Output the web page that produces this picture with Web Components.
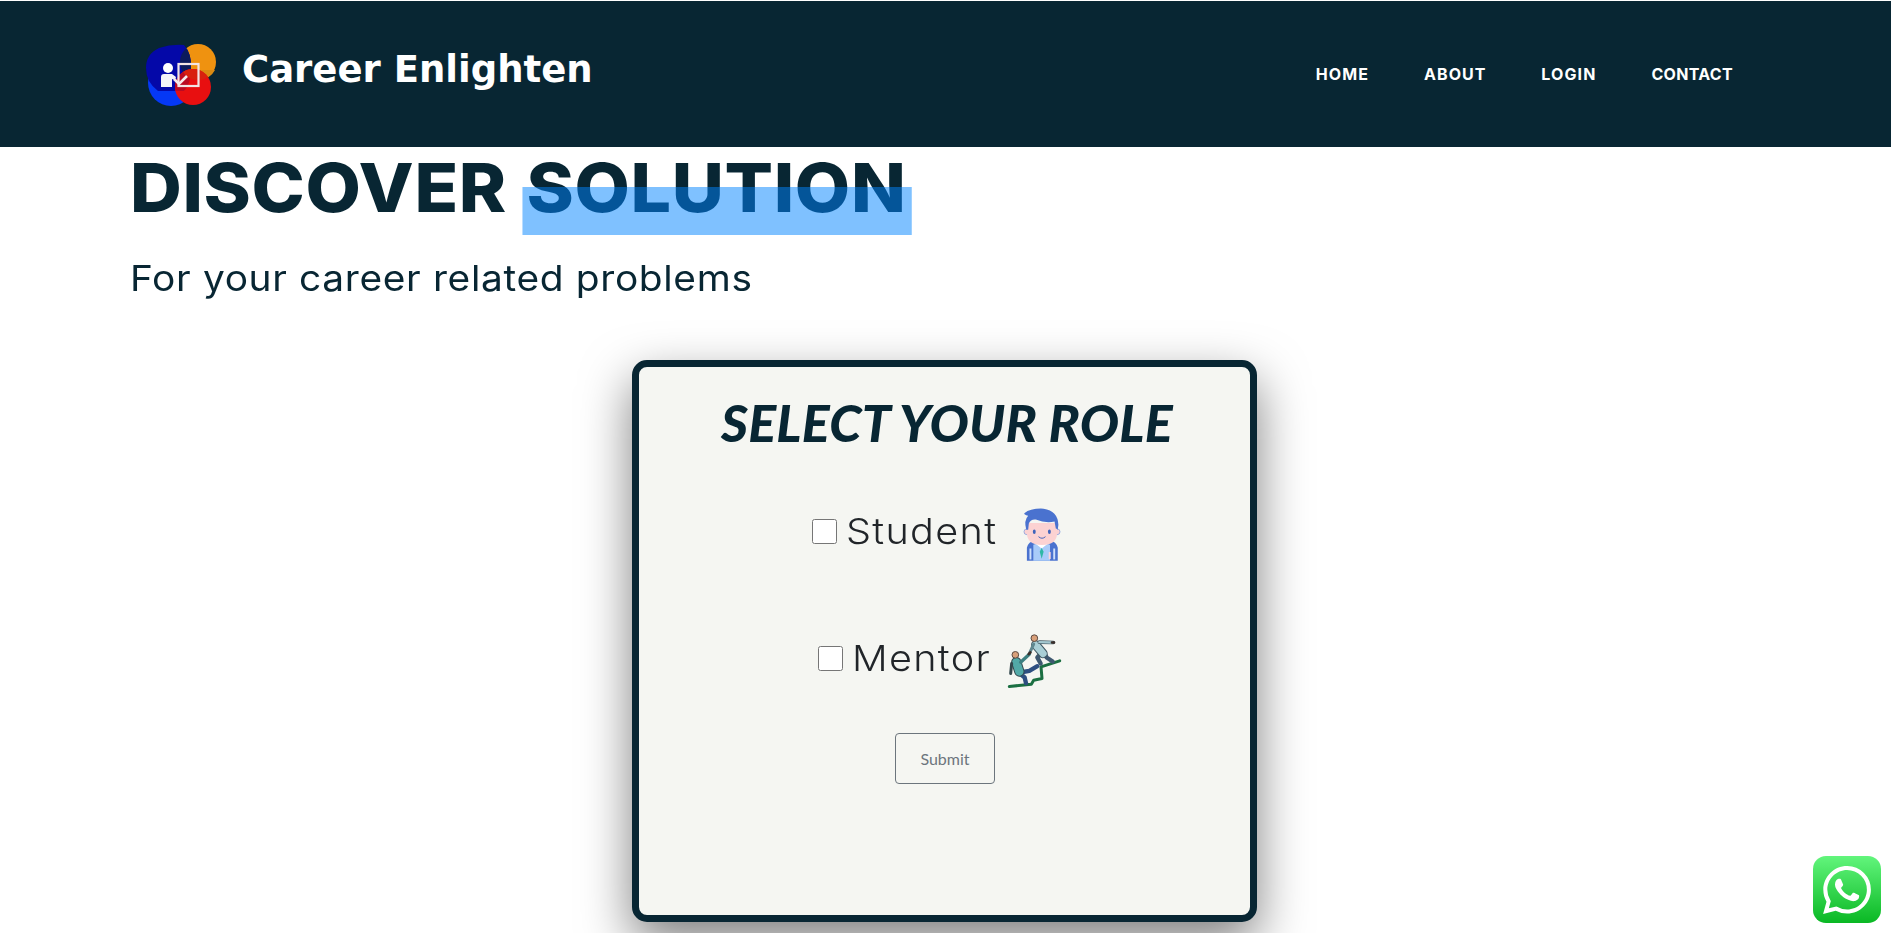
<!DOCTYPE html>
<html lang="en"><head><meta charset="utf-8"><title>Career Enlighten</title>
<style>
html,body{margin:0;padding:0;background:#fff;overflow:hidden;height:933px;}
body{font-family:"Inter","Liberation Sans",sans-serif;color:#212529;}
</style></head><body>
<career-header>
  <nav-link style="--ls:1.1px">HOME</nav-link><nav-link style="--ls:1px">ABOUT</nav-link><nav-link style="--ls:1.1px">LOGIN</nav-link><nav-link style="--ls:.3px">CONTACT</nav-link>
</career-header>
<hero-banner highlight="SOLUTION" lead="DISCOVER">For your career related problems</hero-banner>
<role-card heading="SELECT YOUR ROLE">
  <role-option label="Student" offset="173" icon="student"></role-option>
  <role-option label="Mentor" offset="179" icon="mentor"></role-option>
</role-card>
<whatsapp-button></whatsapp-button>
<script>
const DARK='#082633';
class CareerHeader extends HTMLElement{constructor(){super();this.attachShadow({mode:'open'}).innerHTML=`
<style>
:host{display:flex;box-sizing:border-box;height:146px;margin-top:1px;background:${DARK};align-items:flex-start;padding-left:146px;padding-right:158px;}
.logo{width:70px;height:62px;margin-top:43px;flex:none;display:block}
.brand{font:700 37px/1 "DejaVu Sans",sans-serif;color:#fff;margin:0 0 0 26px;padding-top:50px;white-space:nowrap}
nav{margin-left:auto;display:flex;gap:55px;padding-top:64px}
</style>
<svg class="logo" viewBox="0 0 70 62">
<defs><clipPath id="lens"><path d="M13 4Q25 0 38 1 46 10 45 24 45 40 38 47L12 47Q0 38 0 24 0 10 13 4Z"/></clipPath>
<clipPath id="lens2"><circle cx="47" cy="43" r="18"/></clipPath></defs>
<circle cx="52" cy="18" r="18" fill="#ef9210"/>
<path d="M52 36a18 18 0 0 0 17-10l-20 0z" fill="#d98a12"/>
<circle cx="25" cy="39" r="23" fill="#0538f5"/>
<path d="M13 4Q25 0 38 1 46 10 45 24 45 40 38 47L12 47Q0 38 0 24 0 10 13 4Z" fill="#0408a8"/>
<circle cx="52" cy="18" r="18" fill="#0b1a5c" clip-path="url(#lens)"/>
<circle cx="47" cy="43" r="18" fill="#e80f10"/>
<g clip-path="url(#lens2)"><path d="M13 4Q25 0 38 1 46 10 45 24 45 40 38 47L12 47Q0 38 0 24 0 10 13 4Z" fill="#bb0a22"/><circle cx="52" cy="18" r="18" fill="#d8200e"/></g>
<rect x="32.500" y="20" width="20" height="22" fill="none" stroke="#f2e4e4" stroke-width="2.200"/>
<circle cx="22" cy="24" r="5" fill="#fff"/>
<path d="M15 43V33q0-3 3-3h8l4 3-1 3-3-1v8z" fill="#f4f4f8"/>
<path d="M28 35l5 5 8-8" fill="none" stroke="#f6eaea" stroke-width="2.600"/>
</svg>
<h1 class="brand">Career Enlighten</h1>
<nav><slot></slot></nav>`}}
customElements.define('career-header',CareerHeader);

class NavLink extends HTMLElement{constructor(){super();this.attachShadow({mode:'open'}).innerHTML=`
<style>:host{display:block;font:700 16px/20px "Inter",sans-serif;color:#fff;letter-spacing:var(--ls,.2px);white-space:nowrap;margin-top:-1px}</style><slot></slot>`}}
customElements.define('nav-link',NavLink);

class HeroBanner extends HTMLElement{constructor(){super();const l=this.getAttribute('lead'),h=this.getAttribute('highlight');this.attachShadow({mode:'open'}).innerHTML=`
<style>
:host{display:block;padding-left:130px;color:${DARK}}
h2{margin:0;width:fit-content;font:800 68px/80px "Inter",sans-serif;letter-spacing:.6px;word-spacing:3px;white-space:nowrap;height:82px;transform:scaleX(1.055);transform-origin:left center}
.mark{position:relative;display:inline-block}
.mark::after{content:"";position:absolute;left:-4px;right:-4.500px;top:40px;height:48px;background:rgba(0,131,255,.5)}
p{margin:0;width:fit-content;font:400 36px/46px "Inter",sans-serif;letter-spacing:.6px;padding-top:26px;transform:scaleX(1.08);transform-origin:left center}
</style>
<h2>${l} <span class="mark">${h}</span></h2>
<p><slot></slot></p>`}}
customElements.define('hero-banner',HeroBanner);

class RoleCard extends HTMLElement{constructor(){super();this.attachShadow({mode:'open'}).innerHTML=`
<style>
:host{display:block;box-sizing:border-box;width:625px;height:562px;margin:59px 0 0 632px;border:7px solid ${DARK};border-radius:15px;background:#f5f6f2;box-shadow:0 20px 50px rgba(0,0,0,.5)}
h3{margin:0;padding:25px 0 0 5px;text-align:center;font:italic 900 52px/60px "Lato",sans-serif;color:${DARK};letter-spacing:.25px;height:67px}
.list{display:flex;flex-direction:column;gap:71px;padding-top:44px}
button{display:block;box-sizing:border-box;width:100px;height:51px;margin:47px 0 0 256px;border:1px solid #6c757d;border-radius:4px;background:transparent;color:#6c757d;font:400 16px/1.5 "Lato",sans-serif;padding:0}
</style>
<h3>${this.getAttribute('heading')}</h3>
<div class="list"><slot></slot></div>
<button type="button">Submit</button>`}}
customElements.define('role-card',RoleCard);

const ICONS={student:`<svg style="width:38px;height:54px;margin:7px 0 0 39px" viewBox="700 48 118 168">
<path d="M712 212v-40q2-18 30-26h36q28 8 30 26v40z" fill="#4a72cf"/>
<path d="M732 212v-50l26-8 26 8v50z" fill="#a9cbf9"/>
<path d="M740 160l18 14 18-14-6-10h-24z" fill="#fff"/>
<path d="M758 172l6 12-6 22-6-22z" fill="#2fb8a6"/>
<rect x="780" y="185" width="6" height="22" fill="#fbd5dc"/>
<rect x="720" y="174" width="6" height="34" fill="#cfe0fb"/><rect x="794" y="174" width="6" height="34" fill="#cfe0fb"/>
<circle cx="712" cy="122" r="9" fill="#fcd2d2" stroke="#6d8fdc" stroke-width="2"/><circle cx="806" cy="122" r="9" fill="#fcd2d2" stroke="#6d8fdc" stroke-width="2"/>
<path d="M712 95h94v30q0 38-47 38t-47-38z" fill="#fcd2d2"/>
<path d="M710 116q-8-30 6-44-14-4-12-8 20-16 60-14 44 6 46 50l-2 16q-4-4-6-4l-4-22q-28 6-58-6-16-2-22 12l-2 20z" fill="#4a72cf"/>
<ellipse cx="735" cy="122" rx="4.500" ry="7" fill="#3f63bb"/><ellipse cx="782" cy="122" rx="4.500" ry="7" fill="#3f63bb"/>
<path d="M749 138q10 9 20 0" fill="none" stroke="#3f63bb" stroke-width="3" stroke-linecap="round"/>
</svg>`,
mentor:`<svg style="width:55px;height:57px;margin:6px 0 0 29px" viewBox="655 425 165 170">
<g fill="none" stroke-linecap="round" stroke-linejoin="round">
<path d="M662 585L728 578 735 566 760 561 757 526 813 508" stroke="#1b6f42" stroke-width="9"/>
<path d="M758 484L746 498 756 516M768 486L774 498 792 510" stroke="#3e5870" stroke-width="13"/>
<path d="M741 460L763 486" stroke="#3f5660" stroke-width="28"/>
<path d="M741 460L763 486" stroke="#a9cfd6" stroke-width="22"/>
<path d="M752 452L794 453" stroke="#3f5660" stroke-width="11"/>
<path d="M752 452L790 453" stroke="#a4c8d0" stroke-width="7"/>
<path d="M735 458L723 484" stroke="#5f8890" stroke-width="9"/>
<path d="M694 543L722 538 746 524M694 546L708 558 712 575" stroke="#2e4f80" stroke-width="13"/>
<path d="M683 512L692 540" stroke="#33494e" stroke-width="31"/>
<path d="M683 512L692 540" stroke="#52aaa8" stroke-width="25"/>
<path d="M696 512L722 488" stroke="#3c7f80" stroke-width="10"/>
<path d="M669 516L666 546" stroke="#33494e" stroke-width="9"/>
<path d="M790 453h6M720 488l5-5" stroke="#3a2e2a" stroke-width="8"/>
</g>
<circle cx="737" cy="440" r="10" fill="#d9a07a" stroke="#5a4a42" stroke-width="3"/>
<circle cx="680" cy="490" r="10" fill="#d9a07a" stroke="#5a4a42" stroke-width="3"/>
</svg>`};
class RoleOption extends HTMLElement{constructor(){super();this.attachShadow({mode:'open'}).innerHTML=`
<style>
:host{display:flex;align-items:center;height:56px;padding-left:${this.getAttribute('offset')}px;}
input{margin:0;width:25px;height:25px;flex:none}
label{font:300 36px/44px "Inter",sans-serif;color:#212529;margin-left:9px;white-space:nowrap;letter-spacing:1.2px;transform:scaleX(1.1);transform-origin:left center;display:block}
svg{flex:none;display:block;filter:blur(.35px)}
</style>
<input type="checkbox" id="c"><label for="c">${this.getAttribute('label')}</label>${ICONS[this.getAttribute('icon')]}`}}
customElements.define('role-option',RoleOption);

class WhatsappButton extends HTMLElement{constructor(){super();this.attachShadow({mode:'open'}).innerHTML=`
<style>
:host{position:fixed;left:1813px;top:856px;width:68px;height:67px;border-radius:13px;background:linear-gradient(#62f57c,#0ab824);display:flex;align-items:center;justify-content:center}
svg{width:48px;height:48px;display:block}
</style>
<svg viewBox="0 0 24 24"><path fill="#fff" d="M17.472 14.382c-.297-.149-1.758-.867-2.03-.967-.273-.099-.471-.148-.67.15-.197.297-.767.966-.94 1.164-.173.199-.347.223-.644.075-.297-.15-1.255-.463-2.39-1.475-.883-.788-1.48-1.761-1.653-2.059-.173-.297-.018-.458.13-.606.134-.133.298-.347.446-.52.149-.174.198-.298.298-.497.099-.198.05-.371-.025-.52-.075-.149-.669-1.612-.916-2.207-.242-.579-.487-.5-.669-.51-.173-.008-.371-.01-.57-.01-.198 0-.52.074-.792.372-.272.297-1.04 1.016-1.04 2.479 0 1.462 1.065 2.875 1.213 3.074.149.198 2.096 3.2 5.077 4.487.709.306 1.262.489 1.694.625.712.227 1.36.195 1.871.118.571-.085 1.758-.719 2.006-1.413.248-.694.248-1.289.173-1.413-.074-.124-.272-.198-.57-.347m-5.421 7.403h-.004a9.87 9.87 0 01-5.031-1.378l-.361-.214-3.741.982.998-3.648-.235-.374a9.86 9.86 0 01-1.51-5.26c.001-5.45 4.436-9.884 9.888-9.884 2.64 0 5.122 1.03 6.988 2.898a9.825 9.825 0 012.893 6.994c-.003 5.45-4.437 9.884-9.885 9.884m8.413-18.297A11.815 11.815 0 0012.05 0C5.495 0 .16 5.335.157 11.892c0 2.096.547 4.142 1.588 5.945L.057 24l6.305-1.654a11.882 11.882 0 005.683 1.448h.005c6.554 0 11.89-5.335 11.893-11.893a11.821 11.821 0 00-3.48-8.413z"/></svg>`}}
customElements.define('whatsapp-button',WhatsappButton);
</script>
</body></html>
